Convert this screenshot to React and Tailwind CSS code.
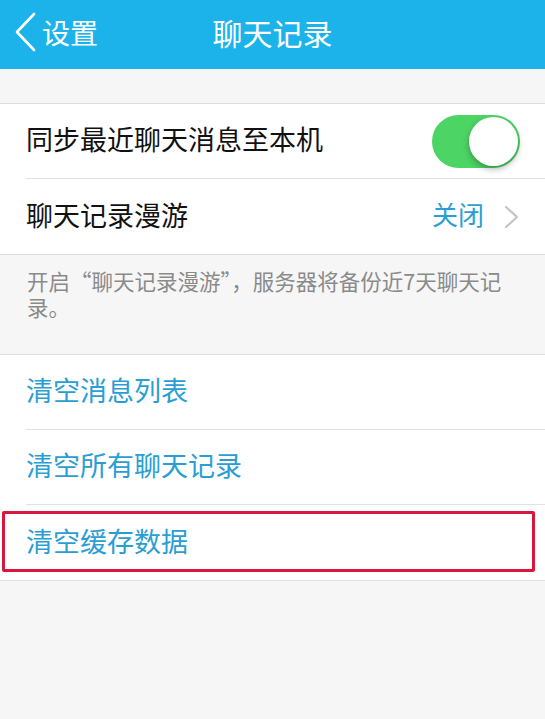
import React from 'react';

const font = { fontFamily: '"Noto Sans CJK SC", "Noto Sans", sans-serif' };

function Toggle() {
  return (
    <div className="relative h-[53px] w-[88px] rounded-full bg-[#4cd464]">
      <div className="absolute right-[2px] top-[2px] h-[49px] w-[49px] rounded-full bg-white shadow-[0_3px_6px_rgba(0,0,0,0.3)]" />
    </div>
  );
}

function Chevron() {
  return (
    <svg width="16" height="24" viewBox="0 0 16 24" fill="none">
      <path d="M2 2 L13 12 L2 22" stroke="#c4c4c4" strokeWidth="2.2" strokeLinecap="round" strokeLinejoin="round" />
    </svg>
  );
}

function Row({ children, right, last, blue }) {
  return (
    <div className="flex h-[75px] items-stretch bg-white pl-[26px]">
      <div
        className={`flex flex-1 items-center justify-between pr-[25px] ${last ? '' : 'border-b border-[#e2e2e2]'}`}
      >
        <span className={`pb-[5px] text-[27px] leading-none ${blue ? 'text-[#2a9ed3]' : 'text-[#111]'}`}>{children}</span>
        {right}
      </div>
    </div>
  );
}

export default function App() {
  return (
    <div style={font} className="min-h-[719px] w-[545px] bg-[#f6f6f6]">
      <div className="relative flex h-[69px] items-center justify-center bg-[#1cb3ea]">
        <div className="absolute left-[13px] top-0 flex h-full items-center gap-[3px] pb-[6px]">
          <svg width="26" height="40" viewBox="0 0 26 40" fill="none">
            <path d="M21 2 L4 20 L21 38" stroke="white" strokeWidth="2.6" strokeLinecap="round" strokeLinejoin="round" />
          </svg>
          <span className="text-[28px] leading-none text-white">设置</span>
        </div>
        <span className="pb-[6px] text-[30px] leading-none text-white">聊天记录</span>
      </div>

      <div className="h-[34px]" />

      <div className="border-y border-[#dedede]">
        <Row right={<Toggle />}>同步最近聊天消息至本机</Row>
        <Row
          last
          right={
            <div className="flex items-center gap-[20px]">
              <span className="pb-[5px] text-[26px] leading-none text-[#2a9ed3]">关闭</span>
              <Chevron />
            </div>
          }
        >
          聊天记录漫游
        </Row>
      </div>

      <div className="h-[99px] pl-[27px] pr-[27px] pt-[13px] text-[21.5px] leading-[26px] text-[#8a8a8a]">
        开启“聊天记录漫游”，服务器将备份近7天聊天记录。
      </div>

      <div className="border-y border-[#dedede]">
        <Row blue>清空消息列表</Row>
        <Row blue>清空所有聊天记录</Row>
        <div className="relative">
          <Row blue last>清空缓存数据</Row>
          <div className="absolute left-[2px] right-[10px] top-[6px] h-[61px] rounded-[2px] border-[3px] border-[#d8173c]" />
        </div>
      </div>
    </div>
  );
}
